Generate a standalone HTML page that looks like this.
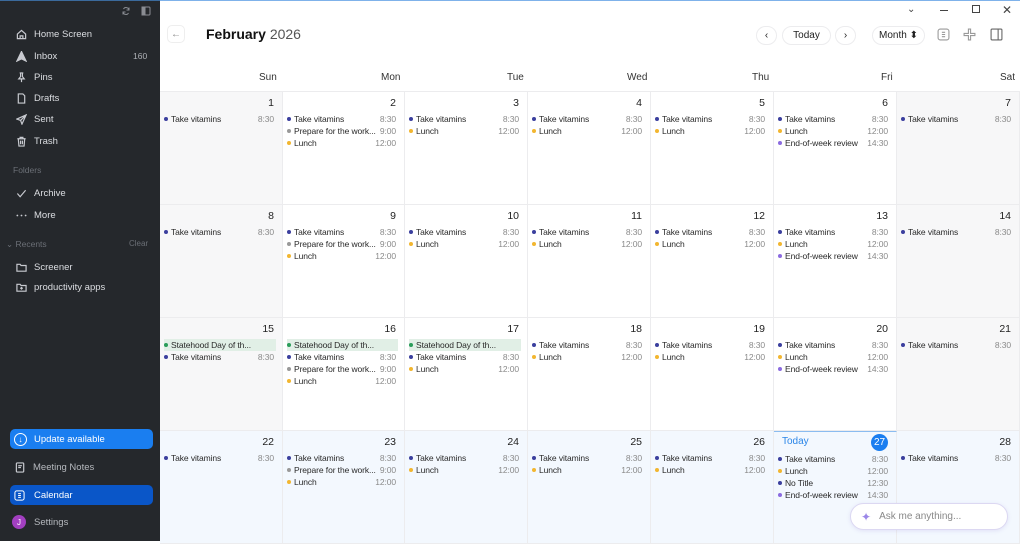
<!DOCTYPE html>
<html><head><meta charset="utf-8"><style>
*{box-sizing:border-box;margin:0;padding:0}
body{width:1020px;height:541px;overflow:hidden;font-family:"Liberation Sans",sans-serif;background:#fff;position:relative}
#sb{position:absolute;left:0;top:0;width:160px;height:541px;background:#25282c;color:#dcdee2;font-size:9.5px}
#sb .it{position:absolute;left:16px;display:flex;align-items:center;height:14px}
#sb .it svg{width:11px;height:11px;margin-right:7px;stroke:#c8cad0;fill:none;stroke-width:1.3}
.sec{position:absolute;color:#6b6f76;font-size:8.5px}
#topline{position:absolute;left:160px;top:0;width:860px;height:1px;background:#7fb2ea}
#sbline{position:absolute;left:0;top:0;width:160px;height:1px;background:#3b6a9c}
.hdr{position:absolute;top:72px;font-size:10px;color:#333}
#grid{position:absolute;left:160px;top:91px;width:860px;height:450px;display:grid;grid-template-columns:123px 122px 123px 123px 123px 123px 123px;grid-template-rows:113px 113px 113px 113px;border-top:1px solid #ececee}
.c{position:relative;border-right:1px solid #ececee;border-bottom:1px solid #ececee;background:#fff}
.w{background:#f7f7f8}
.b{background:#f3f8fe}
.n{position:absolute;right:8px;top:5px;font-size:10.5px;color:#222}
.ev{position:absolute;left:4px;right:8px;height:12px;font-size:8.5px;color:#2a2a2a;display:flex;align-items:center;white-space:nowrap;letter-spacing:-.1px}
.ev i{width:4px;height:4px;border-radius:50%;margin-right:3px;flex:none;background:#3b3f9e}
.ev span{margin-left:auto;color:#8a8a8a}
.g i{background:#999}.y i{background:#f2b630}.p i{background:#8b6be0}.h i{background:#2a9d5a}
.h{background:#e1efe6;right:6px}
.btn{position:absolute;top:26px;height:19px;border:1px solid #ececee;border-radius:10px;font-size:10px;color:#222;display:flex;align-items:center;justify-content:center;background:#fff}
</style></head><body>
<div id="sb">
<div id="sbline"></div>
<svg style="position:absolute;left:121px;top:6px" width="10" height="10" viewBox="0 0 10 10" fill="none" stroke="#8a8d93" stroke-width="1"><path d="M8 4A3 3 0 0 0 2.5 3M2 6a3 3 0 0 0 5.5 1"/><path d="M8 1.5v2.5H5.5M2 8.5V6h2.5"/></svg>
<svg style="position:absolute;left:141px;top:6px" width="10" height="10" viewBox="0 0 10 10" fill="none" stroke="#8a8d93" stroke-width="1"><rect x="1" y="1" width="8" height="8" rx="1"/><rect x="1" y="1" width="3" height="8" fill="#8a8d93"/></svg>
<div class="it" style="top:27px"><svg viewBox="0 0 12 12"><path d="M1.5 5.5L6 1.5l4.5 4v5h-9z"/><path d="M4.5 10.5v-3h3v3"/></svg>Home Screen</div>
<div class="it" style="top:49px"><svg viewBox="0 0 12 12" style="fill:#c8cad0"><path d="M6 .5L11 11 6 8.5 1 11z"/></svg>Inbox</div>
<div style="position:absolute;left:133px;top:51px;font-size:8.5px;color:#aeb1b6">160</div>
<div class="it" style="top:70px"><svg viewBox="0 0 12 12"><path d="M4 1h4M5 1v4L3 7.5h6L7 5V1M6 7.5V11"/></svg>Pins</div>
<div class="it" style="top:91px"><svg viewBox="0 0 12 12"><path d="M2.5 1h5l2 2v8h-7z"/></svg>Drafts</div>
<div class="it" style="top:112px"><svg viewBox="0 0 12 12"><path d="M11 1L1 5.5l4 1.5 1.5 4z M5 7l6-6"/></svg>Sent</div>
<div class="it" style="top:134px"><svg viewBox="0 0 12 12"><path d="M1.5 3h9M4.5 3V1.5h3V3M2.5 3l.7 8h5.6l.7-8M5 5v4M7 5v4"/></svg>Trash</div>
<div class="sec" style="left:13px;top:165px">Folders</div>
<div class="it" style="top:186px"><svg viewBox="0 0 12 12"><path d="M1.5 6l3 3.5 6-7"/></svg>Archive</div>
<div class="it" style="top:208px"><svg viewBox="0 0 12 12" style="fill:#c8cad0;stroke:none"><circle cx="1.5" cy="6" r="1"/><circle cx="6" cy="6" r="1"/><circle cx="10.5" cy="6" r="1"/></svg>More</div>
<div class="sec" style="left:6px;top:239px">⌄ Recents</div>
<div class="sec" style="left:129px;top:239px;font-size:8px">Clear</div>
<div class="it" style="top:260px"><svg viewBox="0 0 12 12"><path d="M1 2.5h3.5l1 1.3H11V10H1z"/></svg>Screener</div>
<div class="it" style="top:280px"><svg viewBox="0 0 12 12"><path d="M1 2.5h3.5l1 1.3H11V10H1z"/><path d="M6 5.3v3M4.5 6.8h3"/></svg>productivity apps</div>
<div style="position:absolute;left:10px;top:429px;width:143px;height:20px;border-radius:5px;background:#1a7ef0;color:#fff;display:flex;align-items:center;padding-left:4px"><span style="width:13px;height:13px;border-radius:50%;border:1.3px solid #fff;display:inline-flex;align-items:center;justify-content:center;font-size:8px;margin-right:7px">↓</span>Update available</div>
<div class="it" style="top:460px;left:15px;color:#b6b9be"><svg viewBox="0 0 12 12"><rect x="1.5" y="1" width="8" height="10" rx="1"/><path d="M3.5 4h4M3.5 6h3"/></svg>Meeting Notes</div>
<div style="position:absolute;left:10px;top:485px;width:143px;height:20px;border-radius:5px;background:#0a56c8;color:#fff;display:flex;align-items:center;padding-left:4px"><svg width="11" height="11" viewBox="0 0 12 12" fill="none" stroke="#fff" stroke-width="1.1" style="margin-right:9px"><rect x="1" y="1" width="10" height="10" rx="2"/><path d="M4.5 4h3M4.5 6h3M4.5 8h3"/></svg>Calendar</div>
<div style="position:absolute;left:12px;top:515px;width:14px;height:14px;border-radius:50%;background:#a23fc0;color:#fff;font-size:8px;display:flex;align-items:center;justify-content:center">J</div>
<div style="position:absolute;left:34px;top:517px;color:#b6b9be">Settings</div>
</div>
<div id="topline"></div>
<div style="position:absolute;left:167px;top:25px;width:18px;height:18px;border:1px solid #eee;border-radius:5px;color:#888;font-size:10px;display:flex;align-items:center;justify-content:center">←</div>
<div style="position:absolute;left:206px;top:26px;font-size:14px;color:#111"><b>February</b> <span style="color:#555">2026</span></div>
<div style="position:absolute;left:907px;top:4px;font-size:10px;color:#444">⌄</div>
<div style="position:absolute;left:940px;top:10px;width:8px;height:1px;background:#444"></div>
<div style="position:absolute;left:972px;top:5px;width:8px;height:8px;border:1px solid #444"></div>
<div style="position:absolute;left:1002px;top:3px;font-size:12px;color:#444">✕</div>
<div class="btn" style="left:756px;width:21px">‹</div>
<div class="btn" style="left:782px;width:49px">Today</div>
<div class="btn" style="left:835px;width:21px">›</div>
<div class="btn" style="left:872px;width:53px">Month ⬍</div>
<svg style="position:absolute;left:937px;top:28px" width="13" height="13" viewBox="0 0 12 12" fill="none" stroke="#999" stroke-width="1"><rect x="1" y="1" width="10" height="10" rx="2"/><path d="M4.5 4h3M4.5 6h3M4.5 8h3"/></svg>
<svg style="position:absolute;left:963px;top:28px" width="13" height="13" viewBox="0 0 12 12" fill="none" stroke="#999" stroke-width="1"><path d="M5 1h2v4h4v2H7v4H5V7H1V5h4z"/></svg>
<svg style="position:absolute;left:990px;top:28px" width="13" height="13" viewBox="0 0 12 12" fill="none" stroke="#666" stroke-width="1"><rect x="1" y="1" width="10" height="10" rx="1"/><path d="M7.5 1v10"/></svg>
<div class="hdr" style="left:259px">Sun</div><div class="hdr" style="left:381px">Mon</div><div class="hdr" style="left:507px">Tue</div><div class="hdr" style="left:627px">Wed</div><div class="hdr" style="left:752px">Thu</div><div class="hdr" style="left:881px">Fri</div><div class="hdr" style="left:1000px">Sat</div>
<div id="grid">
<div class="c w"><div class="n">1</div><div class="ev" style="top:21px"><i></i>Take vitamins<span>8:30</span></div></div>
<div class="c"><div class="n">2</div><div class="ev" style="top:21px"><i></i>Take vitamins<span>8:30</span></div><div class="ev g" style="top:33px"><i></i>Prepare for the work...<span>9:00</span></div><div class="ev y" style="top:45px"><i></i>Lunch<span>12:00</span></div></div>
<div class="c"><div class="n">3</div><div class="ev" style="top:21px"><i></i>Take vitamins<span>8:30</span></div><div class="ev y" style="top:33px"><i></i>Lunch<span>12:00</span></div></div>
<div class="c"><div class="n">4</div><div class="ev" style="top:21px"><i></i>Take vitamins<span>8:30</span></div><div class="ev y" style="top:33px"><i></i>Lunch<span>12:00</span></div></div>
<div class="c"><div class="n">5</div><div class="ev" style="top:21px"><i></i>Take vitamins<span>8:30</span></div><div class="ev y" style="top:33px"><i></i>Lunch<span>12:00</span></div></div>
<div class="c"><div class="n">6</div><div class="ev" style="top:21px"><i></i>Take vitamins<span>8:30</span></div><div class="ev y" style="top:33px"><i></i>Lunch<span>12:00</span></div><div class="ev p" style="top:45px"><i></i>End-of-week review<span>14:30</span></div></div>
<div class="c w"><div class="n">7</div><div class="ev" style="top:21px"><i></i>Take vitamins<span>8:30</span></div></div>
<div class="c w"><div class="n">8</div><div class="ev" style="top:21px"><i></i>Take vitamins<span>8:30</span></div></div>
<div class="c"><div class="n">9</div><div class="ev" style="top:21px"><i></i>Take vitamins<span>8:30</span></div><div class="ev g" style="top:33px"><i></i>Prepare for the work...<span>9:00</span></div><div class="ev y" style="top:45px"><i></i>Lunch<span>12:00</span></div></div>
<div class="c"><div class="n">10</div><div class="ev" style="top:21px"><i></i>Take vitamins<span>8:30</span></div><div class="ev y" style="top:33px"><i></i>Lunch<span>12:00</span></div></div>
<div class="c"><div class="n">11</div><div class="ev" style="top:21px"><i></i>Take vitamins<span>8:30</span></div><div class="ev y" style="top:33px"><i></i>Lunch<span>12:00</span></div></div>
<div class="c"><div class="n">12</div><div class="ev" style="top:21px"><i></i>Take vitamins<span>8:30</span></div><div class="ev y" style="top:33px"><i></i>Lunch<span>12:00</span></div></div>
<div class="c"><div class="n">13</div><div class="ev" style="top:21px"><i></i>Take vitamins<span>8:30</span></div><div class="ev y" style="top:33px"><i></i>Lunch<span>12:00</span></div><div class="ev p" style="top:45px"><i></i>End-of-week review<span>14:30</span></div></div>
<div class="c w"><div class="n">14</div><div class="ev" style="top:21px"><i></i>Take vitamins<span>8:30</span></div></div>
<div class="c w"><div class="n">15</div><div class="ev h" style="top:21px"><i></i>Statehood Day of th...</div><div class="ev" style="top:33px"><i></i>Take vitamins<span>8:30</span></div></div>
<div class="c"><div class="n">16</div><div class="ev h" style="top:21px"><i></i>Statehood Day of th...</div><div class="ev" style="top:33px"><i></i>Take vitamins<span>8:30</span></div><div class="ev g" style="top:45px"><i></i>Prepare for the work...<span>9:00</span></div><div class="ev y" style="top:57px"><i></i>Lunch<span>12:00</span></div></div>
<div class="c"><div class="n">17</div><div class="ev h" style="top:21px"><i></i>Statehood Day of th...</div><div class="ev" style="top:33px"><i></i>Take vitamins<span>8:30</span></div><div class="ev y" style="top:45px"><i></i>Lunch<span>12:00</span></div></div>
<div class="c"><div class="n">18</div><div class="ev" style="top:21px"><i></i>Take vitamins<span>8:30</span></div><div class="ev y" style="top:33px"><i></i>Lunch<span>12:00</span></div></div>
<div class="c"><div class="n">19</div><div class="ev" style="top:21px"><i></i>Take vitamins<span>8:30</span></div><div class="ev y" style="top:33px"><i></i>Lunch<span>12:00</span></div></div>
<div class="c"><div class="n">20</div><div class="ev" style="top:21px"><i></i>Take vitamins<span>8:30</span></div><div class="ev y" style="top:33px"><i></i>Lunch<span>12:00</span></div><div class="ev p" style="top:45px"><i></i>End-of-week review<span>14:30</span></div></div>
<div class="c w"><div class="n">21</div><div class="ev" style="top:21px"><i></i>Take vitamins<span>8:30</span></div></div>
<div class="c b"><div class="n">22</div><div class="ev" style="top:21px"><i></i>Take vitamins<span>8:30</span></div></div>
<div class="c b"><div class="n">23</div><div class="ev" style="top:21px"><i></i>Take vitamins<span>8:30</span></div><div class="ev g" style="top:33px"><i></i>Prepare for the work...<span>9:00</span></div><div class="ev y" style="top:45px"><i></i>Lunch<span>12:00</span></div></div>
<div class="c b"><div class="n">24</div><div class="ev" style="top:21px"><i></i>Take vitamins<span>8:30</span></div><div class="ev y" style="top:33px"><i></i>Lunch<span>12:00</span></div></div>
<div class="c b"><div class="n">25</div><div class="ev" style="top:21px"><i></i>Take vitamins<span>8:30</span></div><div class="ev y" style="top:33px"><i></i>Lunch<span>12:00</span></div></div>
<div class="c b"><div class="n">26</div><div class="ev" style="top:21px"><i></i>Take vitamins<span>8:30</span></div><div class="ev y" style="top:33px"><i></i>Lunch<span>12:00</span></div></div>
<div class="c b" style="border-top:1.5px solid #8bbcf0"><div style="position:absolute;left:8px;top:4px;font-size:10px;color:#2b86e8">Today</div><div style="position:absolute;right:8px;top:2px;width:17px;height:17px;border-radius:50%;background:#1a7ef0;color:#fff;font-size:10px;display:flex;align-items:center;justify-content:center">27</div><div class="ev" style="top:21px"><i></i>Take vitamins<span>8:30</span></div><div class="ev y" style="top:33px"><i></i>Lunch<span>12:00</span></div><div class="ev" style="top:45px"><i></i>No Title<span>12:30</span></div><div class="ev p" style="top:57px"><i></i>End-of-week review<span>14:30</span></div></div>
<div class="c b"><div class="n">28</div><div class="ev" style="top:21px"><i></i>Take vitamins<span>8:30</span></div></div>
</div>
<div style="position:absolute;left:850px;top:503px;width:158px;height:27px;border-radius:14px;background:#fff;border:1px solid #dcd8f2;box-shadow:0 1px 4px rgba(120,100,200,.15);display:flex;align-items:center;padding-left:10px;font-size:10px;color:#888"><span style="color:#9b87e8;margin-right:8px;font-size:12px">✦</span>Ask me anything...</div>
</body></html>
